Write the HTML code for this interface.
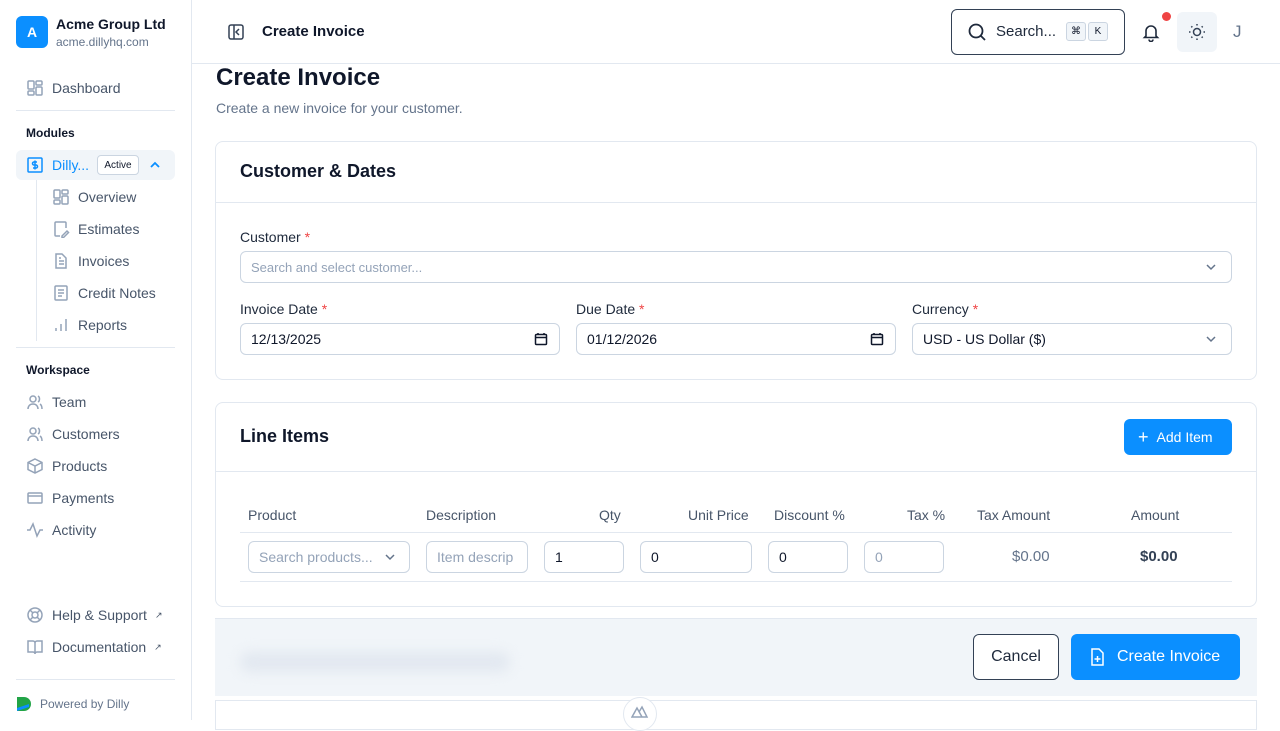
<!DOCTYPE html>
<html><head><meta charset="utf-8"><style>
*{box-sizing:border-box;margin:0;padding:0}
body{width:1280px;height:720px;overflow:hidden;font-family:"Liberation Sans",sans-serif;color:#0f172a;background:#fff;position:relative}
.sb{position:absolute;left:0;top:0;width:192px;height:720px;border-right:1px solid #e2e8f0;background:#fff}
.abs{position:absolute}
.nav{position:absolute;left:26px;display:flex;align-items:center;gap:8px;font-size:14px;color:#475569}
.nav svg{width:18px;height:18px;stroke:#94a3b8;fill:none;stroke-width:1.5}
.sub{left:52px}
.sec{position:absolute;left:26px;font-size:12px;font-weight:bold;color:#0f172a}
.hr{position:absolute;left:16px;width:159px;height:1px;background:#e2e8f0}
.card{position:absolute;left:215px;width:1042px;border:1px solid #e2e8f0;border-radius:8px;background:#fff}
.lbl{position:absolute;font-size:14px;color:#1e293b}
.lbl b{color:#ef4444;font-weight:normal}
.inp{position:absolute;height:32px;border:1px solid #cbd5e1;border-radius:6px;font-size:14px;display:flex;align-items:center;padding-left:10px;color:#0f172a}
.ph{color:#94a3b8}
.th{position:absolute;top:507px;font-size:14px;color:#475569}
</style></head><body>
<div class="sb">
 <div class="abs" style="left:16px;top:16px;width:32px;height:32px;border-radius:6px;background:#0b8fff;color:#fff;font-weight:bold;font-size:14px;display:flex;align-items:center;justify-content:center">A</div>
 <div class="abs" style="left:56px;top:16px;font-size:14px;font-weight:bold">Acme Group Ltd</div>
 <div class="abs" style="left:56px;top:35px;font-size:12px;color:#64748b">acme.dillyhq.com</div>
 <div class="nav" style="top:79px"><svg viewBox="0 0 18 18"><rect x="2" y="2" width="6" height="8" rx="1"/><rect x="10" y="2" width="6" height="4" rx="1"/><rect x="2" y="12" width="6" height="4" rx="1"/><rect x="10" y="8" width="6" height="8" rx="1"/></svg>Dashboard</div>
 <div class="hr" style="top:110px"></div>
 <div class="sec" style="top:126px">Modules</div>
 <div class="abs" style="left:16px;top:150px;width:159px;height:30px;background:#f1f5f9;border-radius:6px"></div>
 <div class="nav" style="top:156px;color:#0b8fff"><svg viewBox="0 0 18 18" style="stroke:#0b8fff"><rect x="2" y="2" width="14" height="14" rx="1"/><path d="M11 6H8a1.5 1.5 0 000 3h2a1.5 1.5 0 010 3H7M9 4.5v9"/></svg>Dilly...</div>
 <div class="abs" style="left:97px;top:155px;width:42px;height:20px;border:1px solid #cbd5e1;border-radius:4px;background:#fff;font-size:10px;display:flex;align-items:center;justify-content:center">Active</div>
 <svg class="abs" style="left:148px;top:158px" width="14" height="14" viewBox="0 0 14 14" fill="none" stroke="#0b8fff" stroke-width="1.8"><path d="M3 9l4-4 4 4"/></svg>
 <div class="abs" style="left:36px;top:180px;width:1px;height:161px;background:#e2e8f0"></div>
 <div class="nav sub" style="top:188px"><svg viewBox="0 0 18 18"><rect x="2" y="2" width="6" height="8" rx="1"/><rect x="10" y="2" width="6" height="4" rx="1"/><rect x="2" y="12" width="6" height="4" rx="1"/><rect x="10" y="8" width="6" height="8" rx="1"/></svg>Overview</div>
 <div class="nav sub" style="top:220px"><svg viewBox="0 0 18 18"><path d="M14 8V3a1 1 0 00-1-1H4a1 1 0 00-1 1v12a1 1 0 001 1h4M10 16l5-5 1.5 1.5-5 5H10z"/></svg>Estimates</div>
 <div class="nav sub" style="top:252px"><svg viewBox="0 0 18 18"><path d="M4 2h6l4 4v10H4zM7 9h5M7 12h5M7 6h2"/></svg>Invoices</div>
 <div class="nav sub" style="top:284px"><svg viewBox="0 0 18 18"><rect x="3" y="2" width="12" height="14" rx="1"/><path d="M6 6h6M6 9h6M6 12h4"/></svg>Credit Notes</div>
 <div class="nav sub" style="top:316px"><svg viewBox="0 0 18 18"><path d="M4 15v-3M9 15V8M14 15V3"/></svg>Reports</div>
 <div class="hr" style="top:347px"></div>
 <div class="sec" style="top:363px">Workspace</div>
 <div class="nav" style="top:393px"><svg viewBox="0 0 18 18"><circle cx="7" cy="6" r="3"/><path d="M2 16c0-3 2-5 5-5s5 2 5 5M12 3c2 1 2 5 0 6M14 11c1.5 1 2 3 2 5"/></svg>Team</div>
 <div class="nav" style="top:425px"><svg viewBox="0 0 18 18"><circle cx="7" cy="6" r="3"/><path d="M2 16c0-3 2-5 5-5s5 2 5 5M12 3c2 1 2 5 0 6M14 11c1.5 1 2 3 2 5"/></svg>Customers</div>
 <div class="nav" style="top:457px"><svg viewBox="0 0 18 18"><path d="M9 2l7 3.5v7L9 16l-7-3.5v-7zM2 5.5L9 9l7-3.5M9 9v7"/></svg>Products</div>
 <div class="nav" style="top:489px"><svg viewBox="0 0 18 18"><rect x="2" y="4" width="14" height="10" rx="1"/><path d="M2 7h14"/></svg>Payments</div>
 <div class="nav" style="top:521px"><svg viewBox="0 0 18 18"><path d="M1 9h3l3-6 4 12 3-6h3"/></svg>Activity</div>
 <div class="nav" style="top:606px"><svg viewBox="0 0 18 18"><circle cx="9" cy="9" r="7"/><circle cx="9" cy="9" r="3"/><path d="M4 4l3 3M14 4l-3 3M4 14l3-3M14 14l-3-3"/></svg>Help &amp; Support<sup style="font-size:9px">↗</sup></div>
 <div class="nav" style="top:638px"><svg viewBox="0 0 18 18"><path d="M2 3h5a2 2 0 012 2v11a2 2 0 00-2-2H2zM16 3h-5a2 2 0 00-2 2v11a2 2 0 012-2h5z"/></svg>Documentation<sup style="font-size:9px">↗</sup></div>
 <div class="hr" style="top:679px"></div>
 <svg class="abs" style="left:16px;top:696px" width="16" height="16" viewBox="0 0 16 16"><path d="M1 1h7a7 7 0 010 14H1z" fill="#22a447"/><path d="M1 12l12-4v3L1 15z" fill="#0b8fff"/></svg>
 <div class="abs" style="left:40px;top:697px;font-size:12px;color:#64748b">Powered by Dilly</div>
</div>

<div class="abs" style="left:192px;top:0;width:1088px;height:64px;border-bottom:1px solid #e2e8f0;background:#fff"></div>
<svg class="abs" style="left:227px;top:23px" width="18" height="18" viewBox="0 0 18 18" fill="none" stroke="#334155" stroke-width="1.5"><rect x="2" y="2" width="14" height="14" rx="2"/><path d="M7 2v14M12 6l-3 3 3 3"/></svg>
<div class="abs" style="left:262px;top:23px;font-size:15px;font-weight:bold">Create Invoice</div>
<div class="abs" style="left:951px;top:9px;width:174px;height:46px;border:1.5px solid #334155;border-radius:6px"></div>
<svg class="abs" style="left:967px;top:22px" width="20" height="20" viewBox="0 0 20 20" fill="none" stroke="#1e293b" stroke-width="1.8"><circle cx="9" cy="9" r="6.5"/><path d="M14 14l4 4"/></svg>
<div class="abs" style="left:996px;top:23px;font-size:15px;color:#1e293b">Search...</div>
<div class="abs" style="left:1066px;top:22px;width:20px;height:19px;border:1px solid #cbd5e1;border-radius:3px;background:#f1f5f9;font-size:10px;display:flex;align-items:center;justify-content:center">⌘</div>
<div class="abs" style="left:1088px;top:22px;width:20px;height:19px;border:1px solid #cbd5e1;border-radius:3px;background:#f1f5f9;font-size:10px;display:flex;align-items:center;justify-content:center">K</div>
<svg class="abs" style="left:1141px;top:22px" width="20" height="20" viewBox="0 0 20 20" fill="none" stroke="#1e293b" stroke-width="1.6"><path d="M5 14V9a5 5 0 0110 0v5l1.5 1.5h-13zM8 17.5a2 2 0 004 0"/></svg>
<div class="abs" style="left:1162px;top:12px;width:9px;height:9px;border-radius:50%;background:#ef4444"></div>
<div class="abs" style="left:1177px;top:12px;width:40px;height:40px;border-radius:6px;background:#f1f5f9"></div>
<svg class="abs" style="left:1187px;top:22px" width="20" height="20" viewBox="0 0 20 20" fill="none" stroke="#334155" stroke-width="1.5"><circle cx="10" cy="10" r="3.5"/><path d="M10 2v1.5M10 16.5V18M2 10h1.5M16.5 10H18M4.3 4.3l1 1M14.7 14.7l1 1M4.3 15.7l1-1M14.7 5.3l1-1"/></svg>
<div class="abs" style="left:1233px;top:22px;font-size:17px;color:#64748b">J</div>

<div class="abs" style="left:216px;top:64px;font-size:24px;font-weight:bold">Create Invoice</div>
<div class="abs" style="left:216px;top:100px;font-size:14px;color:#64748b">Create a new invoice for your customer.</div>

<div class="card" style="top:141px;height:239px"></div>
<div class="abs" style="left:216px;top:202px;width:1040px;height:1px;background:#e2e8f0"></div>
<div class="abs" style="left:240px;top:161px;font-size:18px;font-weight:bold">Customer &amp; Dates</div>
<div class="lbl" style="left:240px;top:229px">Customer <b>*</b></div>
<div class="inp" style="left:240px;top:251px;width:992px"><span class="ph" style="font-size:13px">Search and select customer...</span></div>
<svg class="abs" style="left:1204px;top:260px" width="14" height="14" viewBox="0 0 14 14" fill="none" stroke="#64748b" stroke-width="1.5"><path d="M3 5l4 4 4-4"/></svg>
<div class="lbl" style="left:240px;top:301px">Invoice Date <b>*</b></div>
<div class="lbl" style="left:576px;top:301px">Due Date <b>*</b></div>
<div class="lbl" style="left:912px;top:301px">Currency <b>*</b></div>
<div class="inp" style="left:240px;top:323px;width:320px">12/13/2025</div>
<div class="inp" style="left:576px;top:323px;width:320px">01/12/2026</div>
<div class="inp" style="left:912px;top:323px;width:320px">USD - US Dollar ($)</div>
<svg class="abs" style="left:534px;top:332px" width="14" height="14" viewBox="0 0 14 14" fill="none" stroke="#0f172a" stroke-width="1.5"><rect x="1.5" y="2.5" width="11" height="10" rx="1"/><path d="M1.5 5.5h11M4 1v2M10 1v2"/></svg>
<svg class="abs" style="left:870px;top:332px" width="14" height="14" viewBox="0 0 14 14" fill="none" stroke="#0f172a" stroke-width="1.5"><rect x="1.5" y="2.5" width="11" height="10" rx="1"/><path d="M1.5 5.5h11M4 1v2M10 1v2"/></svg>
<svg class="abs" style="left:1204px;top:332px" width="14" height="14" viewBox="0 0 14 14" fill="none" stroke="#64748b" stroke-width="1.5"><path d="M3 5l4 4 4-4"/></svg>

<div class="card" style="top:402px;height:205px"></div>
<div class="abs" style="left:216px;top:471px;width:1040px;height:1px;background:#e2e8f0"></div>
<div class="abs" style="left:240px;top:426px;font-size:18px;font-weight:bold">Line Items</div>
<div class="abs" style="left:1124px;top:419px;width:108px;height:36px;border-radius:6px;background:#0b8fff;color:#fff;font-size:14px;display:flex;align-items:center;padding-left:14px;gap:8px"><span style="font-size:18px;line-height:1">+</span>Add Item</div>
<div class="th" style="left:248px">Product</div>
<div class="th" style="left:426px">Description</div>
<div class="th" style="left:599px">Qty</div>
<div class="th" style="left:688px">Unit Price</div>
<div class="th" style="left:774px">Discount %</div>
<div class="th" style="left:907px">Tax %</div>
<div class="th" style="left:977px">Tax Amount</div>
<div class="th" style="left:1131px">Amount</div>
<div class="abs" style="left:240px;top:532px;width:992px;height:1px;background:#e2e8f0"></div>
<div class="abs" style="left:240px;top:581px;width:992px;height:1px;background:#e2e8f0"></div>
<div class="inp" style="left:248px;top:541px;width:162px"><span class="ph">Search products...</span></div>
<svg class="abs" style="left:383px;top:550px" width="14" height="14" viewBox="0 0 14 14" fill="none" stroke="#64748b" stroke-width="1.5"><path d="M3 5l4 4 4-4"/></svg>
<div class="inp" style="left:426px;top:541px;width:102px;overflow:hidden;white-space:nowrap"><span class="ph">Item descrip</span></div>
<div class="inp" style="left:544px;top:541px;width:80px">1</div>
<div class="inp" style="left:640px;top:541px;width:112px">0</div>
<div class="inp" style="left:768px;top:541px;width:80px">0</div>
<div class="inp" style="left:864px;top:541px;width:80px"><span class="ph">0</span></div>
<div class="abs" style="left:1012px;top:548px;font-size:15px;color:#64748b">$0.00</div>
<div class="abs" style="left:1140px;top:548px;font-size:15px;font-weight:bold;color:#334155">$0.00</div>

<div class="abs" style="left:215px;top:618px;width:1042px;height:78px;background:#f1f5f9;border-top:1px solid #e2e8f0"></div>
<div class="abs" style="left:240px;top:652px;width:270px;height:20px;background:#e2e8f0;filter:blur(6px);border-radius:10px"></div>
<div class="abs" style="left:215px;top:700px;width:1042px;height:30px;border:1px solid #e2e8f0;background:#fff"></div>
<div class="abs" style="left:623px;top:697px;width:34px;height:34px;border-radius:50%;background:#fff;border:1px solid #e2e8f0"></div>
<svg class="abs" style="left:631px;top:704px" width="18" height="14" viewBox="0 0 18 14" fill="none" stroke="#94a3b8" stroke-width="1.5"><path d="M1 13L6 4l5 9zM8 8l3-5 5 10h-5"/></svg>
<div class="abs" style="left:973px;top:634px;width:86px;height:46px;border:1.5px solid #334155;border-radius:6px;background:#fff;font-size:16px;display:flex;align-items:center;justify-content:center;color:#1e293b">Cancel</div>
<div class="abs" style="left:1071px;top:634px;width:169px;height:46px;border-radius:6px;background:#0b8fff;color:#fff;font-size:16px;display:flex;align-items:center;padding-left:16px;gap:10px"><svg width="20" height="20" viewBox="0 0 20 20" fill="none" stroke="#fff" stroke-width="1.5"><path d="M5 2h7l4 4v12H5zM10.5 9v6M7.5 12h6"/></svg>Create Invoice</div>
</body></html>
